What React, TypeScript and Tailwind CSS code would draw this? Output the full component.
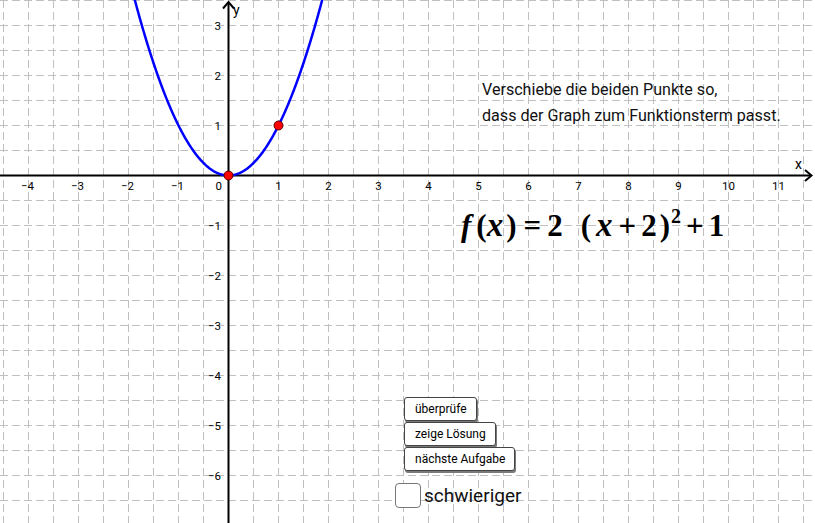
import React from 'react';

const OX = 228.5;
const OY = 175.5;
const U = 50;

const px = (x: number) => OX + x * U;
const py = (y: number) => OY - y * U;

function parabolaPath() {
  const pts: string[] = [];
  for (let x = -1.95; x <= 1.951; x += 0.01) {
    pts.push(`${px(x).toFixed(2)},${py(x * x).toFixed(2)}`);
  }
  return 'M' + pts.join(' L');
}

function Graph() {
  const vLines = Array.from({ length: 33 }, (_, k) => 3.5 + 25 * k);
  const hLines = Array.from({ length: 21 }, (_, k) => 0.5 + 25 * k);
  const xLabels = [-4, -3, -2, -1, 1, 2, 3, 4, 5, 6, 7, 8, 9, 10, 11];
  const yLabels = [3, 2, 1, -1, -2, -3, -4, -5, -6];
  const fmt = (n: number) => (n < 0 ? `\u2212${-n}` : `${n}`);

  return (
    <svg width={815} height={523} viewBox="0 0 815 523" className="block">
      {/* grid */}
      <g stroke="#c0c0c0" strokeWidth={1} strokeDasharray="8 4">
        {vLines.map((x) => (
          <line key={`v${x}`} x1={x} y1={0} x2={x} y2={523} />
        ))}
        {hLines.map((y) => (
          <line key={`h${y}`} x1={0} y1={y} x2={815} y2={y} />
        ))}
      </g>

      {/* axes */}
      <g stroke="#000" strokeWidth={2} fill="none">
        <line x1={0} y1={OY} x2={811} y2={OY} />
        <polyline points="805,170 811.5,175.5 805,181" strokeLinejoin="miter" />
        <line x1={OX} y1={523} x2={OX} y2={3} />
        <polyline points="223,8.5 228.5,2 234,8.5" />
      </g>

      <g fontFamily="Roboto, 'Liberation Sans', sans-serif" fontSize={11.5} fill="#000">
        {xLabels.map((n) => (
          <text key={`x${n}`} x={px(n) + (n < 0 ? -1 : 0)} y={190} textAnchor="middle">
            {fmt(n)}
          </text>
        ))}
        {yLabels.map((n) => (
          <text key={`y${n}`} x={221} y={py(n) + 4} textAnchor="end">
            {fmt(n)}
          </text>
        ))}
        <text x={222} y={190} textAnchor="end">0</text>
        <text x={795} y={169} fontSize={14}>x</text>
        <text x={233} y={15} fontSize={14}>y</text>
      </g>

      {/* function */}
      <path d={parabolaPath()} stroke="#0000ff" strokeWidth={2.5} fill="none" />

      {/* points */}
      <circle cx={px(0)} cy={py(0)} r={4.5} fill="#ff0000" stroke="#5a0000" strokeWidth={1} />
      <circle cx={px(1)} cy={py(1)} r={4.5} fill="#ff0000" stroke="#5a0000" strokeWidth={1} />
    </svg>
  );
}

function Btn({ children }: { children: React.ReactNode }) {
  return (
    <button className="h-[24px] pl-[10px] pr-[9px] bg-white border border-[#444] rounded-[3px] shadow-[1px_2px_0_0_#7a7a7a] text-[12px] leading-none text-black font-['Roboto',sans-serif] text-left">
      {children}
    </button>
  );
}

export default function App() {
  return (
    <div className="relative w-[815px] h-[523px] bg-white overflow-hidden font-['Roboto','Liberation_Sans',sans-serif]">
      <Graph />

      <div className="absolute left-[482px] top-[77px] text-[16.1px] leading-[26px] text-[#111]">
        <p>Verschiebe die beiden Punkte so,</p>
        <p>dass der Graph zum Funktionsterm passt.</p>
      </div>

      <div className="absolute left-[461px] top-[209px] flex items-baseline font-['Liberation_Serif',serif] font-bold text-[31px] leading-none text-black">
        <span className="italic">f</span>
        <span className="ml-[5px]">(</span>
        <span className="italic text-[33px]">x</span>
        <span className="ml-[3px]">)</span>
        <span className="ml-[7px]">=</span>
        <span className="ml-[6px]">2</span>
        <span className="ml-[18px]">(</span>
        <span className="italic text-[33px] ml-[5px]">x</span>
        <span className="ml-[6px]">+</span>
        <span className="ml-[5px]">2</span>
        <span className="ml-[3px]">)</span>
        <span className="text-[20px] relative -top-[13px] ml-[1px]">2</span>
        <span className="ml-[5px]">+</span>
        <span className="ml-[5px]">1</span>
      </div>

      <div className="absolute left-[404px] top-[397px] flex flex-col items-start gap-[1px]">
        <Btn>überprüfe</Btn>
        <Btn>zeige Lösung</Btn>
        <Btn>nächste Aufgabe</Btn>
      </div>

      <div className="absolute left-[395px] top-[483px] flex items-center gap-[3px]">
        <div className="w-[26px] h-[25px] border border-[#777] rounded-[4px] bg-white" />
        <span className="text-[19px] leading-none text-[#111]">schwieriger</span>
      </div>
    </div>
  );
}
